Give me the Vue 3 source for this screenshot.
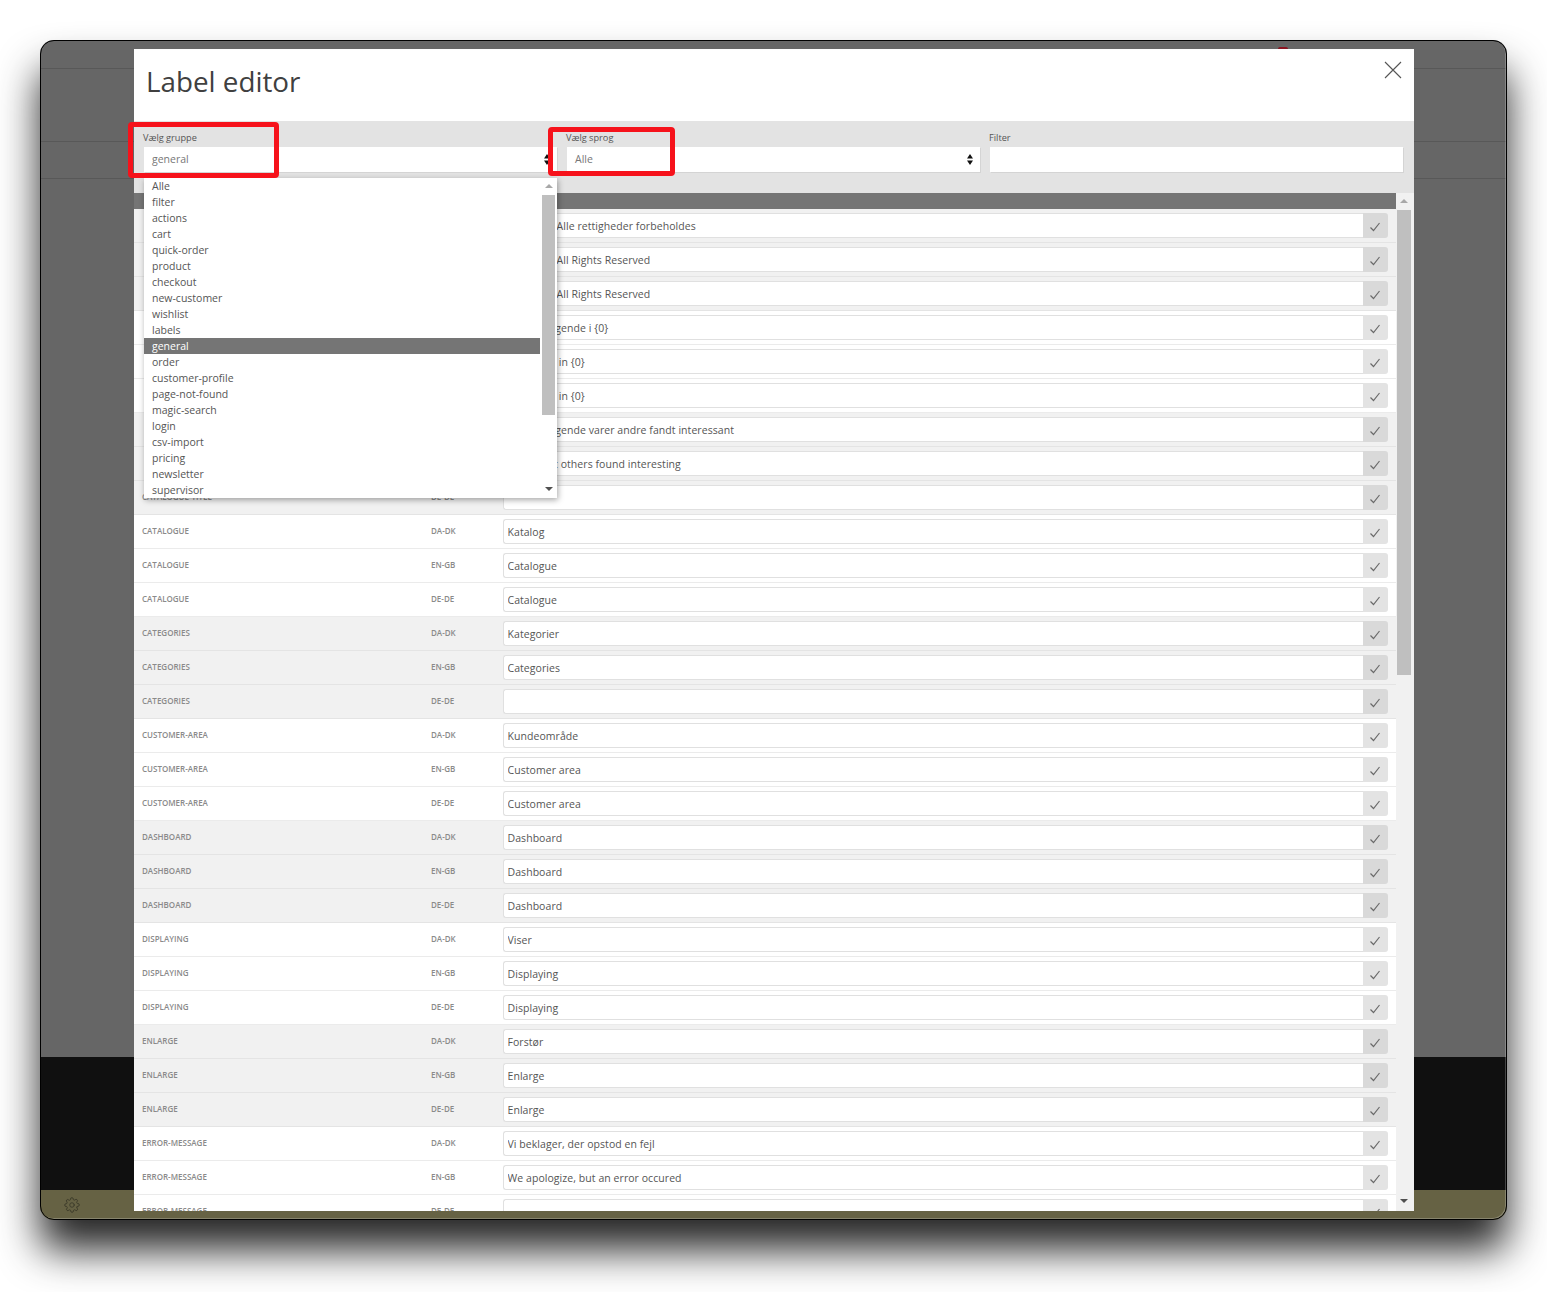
<script setup>
const groups = ['Alle','filter','actions','cart','quick-order','product','checkout','new-customer','wishlist','labels','general','order','customer-profile','page-not-found','magic-search','login','csv-import','pricing','newsletter','supervisor']
const L = ['DA-DK','EN-GB','DE-DE']
const sets = [
  ['',['© Firman Alle rettigheder forbeholdes','© Firman All Rights Reserved','© Firman All Rights Reserved'],true],
  ['',['Øvrige følgende i {0}','Bestseller in {0}','Bestseller in {0}'],false],
  ['catalogue-title',['Øvrige følgende varer andre fandt interessant','Items that others found interesting',''],true],
  ['catalogue',['Katalog','Catalogue','Catalogue'],false],
  ['categories',['Kategorier','Categories',''],true],
  ['customer-area',['Kundeområde','Customer area','Customer area'],false],
  ['dashboard',['Dashboard','Dashboard','Dashboard'],true],
  ['displaying',['Viser','Displaying','Displaying'],false],
  ['enlarge',['Forstør','Enlarge','Enlarge'],true],
  ['error-message',['Vi beklager, der opstod en fejl','We apologize, but an error occured',''],false],
]
const rows = sets
  .flatMap(([label, vals, shaded]) => vals.map((v, i) => ({ label, code: L[i], value: v, shaded })))
  .map((r, i) => (i < 8 ? { ...r, label: '', code: '' } : r))
</script>

<template>
  <div class="stage">
    <div class="window">
      <div class="page">
        <div class="bg-row r1"></div>
        <div class="bg-row r2"></div>
        <div class="bg-row r3"></div>
        <div class="bg-fill"></div>
        <div class="bg-black"></div>
        <div class="bg-foot">
          <svg class="gear" viewBox="0 0 24 24" width="16" height="16" fill="none" stroke="#3c3b2a" stroke-width="1.4" stroke-linecap="round" stroke-linejoin="round">
            <circle cx="12" cy="12" r="3.4"/>
            <path d="M19.4 15a1.65 1.65 0 0 0 .33 1.82l.06.06a2 2 0 1 1-2.83 2.83l-.06-.06a1.65 1.65 0 0 0-2.8 1.17V21a2 2 0 0 1-4 0v-.09a1.65 1.65 0 0 0-2.81-1.14l-.06.06a2 2 0 1 1-2.83-2.83l.06-.06a1.65 1.65 0 0 0-1.17-2.8H3a2 2 0 0 1 0-4h.09a1.65 1.65 0 0 0 1.14-2.81l-.06-.06a2 2 0 1 1 2.83-2.83l.06.06a1.65 1.65 0 0 0 2.8-1.17V3a2 2 0 0 1 4 0v.09a1.65 1.65 0 0 0 2.81 1.14l.06-.06a2 2 0 1 1 2.83 2.83l-.06.06a1.65 1.65 0 0 0 1.17 2.8H21a2 2 0 0 1 0 4h-.09a1.65 1.65 0 0 0-1.51 1z"/>
          </svg>
        </div>
      </div>
      <div class="spot"></div>

      <div class="modal">
        <header class="head">
          <h1>Label editor</h1>
          <svg class="close" viewBox="0 0 18 18" width="18" height="18" stroke="#555" stroke-width="1.1" fill="none">
            <path d="M1 1l16 16M17 1L1 17"/>
          </svg>
        </header>

        <section class="filters">
          <div class="field">
            <label>Vælg gruppe</label>
            <div class="control">
              <span>general</span>
              <svg class="updown" viewBox="0 0 6 11" width="6" height="11" fill="#111"><path d="M3 0l3 4.4H0zM3 11l3-4.4H0z"/></svg>
            </div>
          </div>
          <div class="field">
            <label>Vælg sprog</label>
            <div class="control">
              <span>Alle</span>
              <svg class="updown" viewBox="0 0 6 11" width="6" height="11" fill="#111"><path d="M3 0l3 4.4H0zM3 11l3-4.4H0z"/></svg>
            </div>
          </div>
          <div class="field">
            <label>Filter</label>
            <div class="control"></div>
          </div>
        </section>

        <section class="table-area">
          <div class="table">
            <div class="thead"></div>
            <div v-for="(r, i) in rows" :key="i" class="row" :class="{ shaded: r.shaded }">
              <span class="name">{{ r.label }}</span>
              <span class="code">{{ r.code }}</span>
              <div class="edit">
                <input type="text" :value="r.value" />
                <button type="button" aria-label="Gem">
                  <svg viewBox="0 0 12 10" width="12" height="10" fill="none" stroke="#6a6a6a" stroke-width="1.2"><path d="M1.5 5.5l3 3 6-7.5"/></svg>
                </button>
              </div>
            </div>
          </div>
          <div class="vscroll">
            <i class="tri up"></i>
            <div class="track"><div class="thumb"></div></div>
            <i class="tri down"></i>
          </div>
        </section>

        <div class="dropdown">
          <ul>
            <li v-for="g in groups" :key="g" :class="{ selected: g === 'general' }">{{ g }}</li>
          </ul>
          <div class="dd-scroll">
            <i class="tri up"></i>
            <div class="dd-track"><div class="dd-thumb"></div></div>
            <i class="tri down"></i>
          </div>
        </div>
      </div>

      <div class="mark mark-a"></div>
      <div class="mark mark-b"></div>
      <div class="edge"></div>
    </div>
  </div>
</template>

<style>
html, body { margin: 0; background: #fff; }
</style>

<style scoped>
.stage {
  width: 1547px;
  height: 1292px;
  padding: 40px 40px 0;
  box-sizing: border-box;
  overflow: hidden;
  font-family: "Open Sans", "Noto Sans", sans-serif;
}
.window {
  position: relative;
  width: 1467px;
  height: 1180px;
  border-radius: 14px;
  box-sizing: border-box;
  background: #666;
  box-shadow: 0 30px 40px rgba(0, 0, 0, .85);
}
.page {
  height: 100%;
  display: flex;
  flex-direction: column;
  border-radius: 14px;
  overflow: hidden;
}
.bg-row { border-bottom: 1px solid #585858; box-sizing: border-box; flex: none; }
.r1 { height: 29px; }
.r2 { height: 73px; }
.r3 { height: 37px; }
.bg-fill { flex: 1; background: #666; }
.bg-black { height: 133px; background: #101010; flex: none; }
.bg-foot { height: 30px; background: #666244; flex: none; display: flex; align-items: flex-start; padding: 7px 0 0 24px; box-sizing: border-box; }
.gear { display: block; }
.spot {
  position: absolute;
  left: 1238px;
  top: 7px;
  width: 10px;
  height: 2px;
  border-radius: 5px 5px 0 0;
  background: #8a1420;
}
.edge {
  position: absolute;
  inset: 0;
  border-radius: 14px;
  border: 1px solid #000;
  box-shadow: inset -1px -1px 0 rgba(255, 255, 255, .22);
  pointer-events: none;
}
.modal {
  position: absolute;
  left: 94px;
  top: 9px;
  width: 1280px;
  height: 1162px;
  background: #fff;
  display: flex;
  flex-direction: column;
  overflow: hidden;
  color: #555;
}
.head {
  height: 72px;
  flex: none;
  position: relative;
  box-sizing: border-box;
  padding: 12px 12px 0;
}
.head h1 {
  margin: 0;
  font-size: 27.8px;
  line-height: 40px;
  font-weight: 400;
  color: #404040;
}
.close { position: absolute; right: 12px; top: 12px; }
.filters {
  height: 72px;
  flex: none;
  background: #e3e3e3;
  display: grid;
  grid-template-columns: repeat(3, 413px);
  gap: 10px;
  padding: 0 10px;
  box-sizing: border-box;
}
.field label {
  display: block;
  font-size: 9.2px;
  line-height: 12px;
  margin: 11px 0 3px -1px;
  color: #555;
}
.control {
  height: 25px;
  background: #fff;
  box-shadow: 1px 1px 0 #d4d4d4;
  display: flex;
  align-items: center;
  justify-content: space-between;
  padding: 0 7px 2px 8px;
  box-sizing: border-box;
  font-size: 10.5px;
  color: #777;
}
.updown { display: block; margin-top: 2px; }
.table-area {
  flex: 1;
  min-height: 0;
  display: flex;
  background: #f1f1f1;
}
.table { width: 1262px; flex: none; overflow: hidden; }
.thead { height: 16px; background: #757575; }
.row {
  height: 34px;
  box-sizing: border-box;
  background: #fff;
  border-bottom: 1px solid #ebebeb;
  display: flex;
  align-items: flex-start;
  padding-left: 8px;
}
.row.shaded { background: #f1f1f1; border-bottom-color: #e4e4e4; }
.name {
  width: 289px;
  flex: none;
  font-size: 8px;
  line-height: 32px;
  font-weight: 600;
  text-transform: uppercase;
  color: #8a8a8a;
  white-space: nowrap;
}
.code {
  width: 72px;
  flex: none;
  font-size: 8px;
  line-height: 32px;
  font-weight: 600;
  color: #8a8a8a;
}
.edit { display: flex; width: 885px; height: 25px; margin-top: 4px; }
.edit input {
  flex: 1;
  min-width: 0;
  height: 25px;
  box-sizing: border-box;
  border: 1px solid #e0e0e0;
  border-right: 0;
  border-radius: 3px 0 0 3px;
  padding: 1px 3.5px 0;
  margin: 0;
  background: #fff;
  font: 10.5px "Open Sans", "Noto Sans", sans-serif;
  letter-spacing: .06px;
  color: #555;
  outline: none;
}
.edit button {
  width: 25px;
  height: 25px;
  flex: none;
  border: 0;
  padding: 2px 2px 0 0;
  box-sizing: border-box;
  background: #e3e3e3;
  border-radius: 0 3px 3px 0;
  display: flex;
  align-items: center;
  justify-content: center;
}
.row.shaded .edit button { background: #d9d9d9; }
.vscroll {
  flex: 1;
  display: flex;
  flex-direction: column;
  align-items: center;
  padding-right: 2px;
}
.track { flex: 1; width: 14px; }
.thumb { width: 14px; height: 465px; background: #bfbfbf; }
.tri { display: block; width: 0; height: 0; border-left: 4px solid transparent; border-right: 4px solid transparent; flex: none; }
.tri.up { border-bottom: 4px solid #a8a8a8; margin: 6px 0 7px; }
.tri.down { border-top: 4px solid #505050; margin: 6px 0 8px; }
.dropdown {
  position: absolute;
  left: 10px;
  top: 129px;
  width: 413px;
  height: 320px;
  background: #fff;
  box-shadow: 1px 2px 6px rgba(0, 0, 0, .35);
  display: flex;
}
.dropdown ul { list-style: none; margin: 0; padding: 0; flex: 1; min-width: 0; }
.dropdown li {
  height: 16px;
  line-height: 16px;
  padding-left: 8px;
  font-size: 10.5px;
  color: #555;
}
.dropdown li.selected { background: #757575; color: #fff; }
.dd-scroll {
  width: 17px;
  flex: none;
  display: flex;
  flex-direction: column;
  align-items: center;
  box-sizing: border-box;
}
.dd-scroll .tri.up { margin: 6px 0 7px; }
.dd-scroll .tri.down { margin: 5px 0 7px; }
.dd-track { flex: 1; width: 13px; }
.dd-thumb { width: 13px; height: 220px; background: #bfbfbf; }
.mark {
  position: absolute;
  box-sizing: border-box;
  border: 5px solid #f6121b;
  border-radius: 4px;
  pointer-events: none;
}
.mark-a { left: 88px; top: 82px; width: 151px; height: 56px; }
.mark-b { left: 508px; top: 87px; width: 127px; height: 49px; }
</style>
